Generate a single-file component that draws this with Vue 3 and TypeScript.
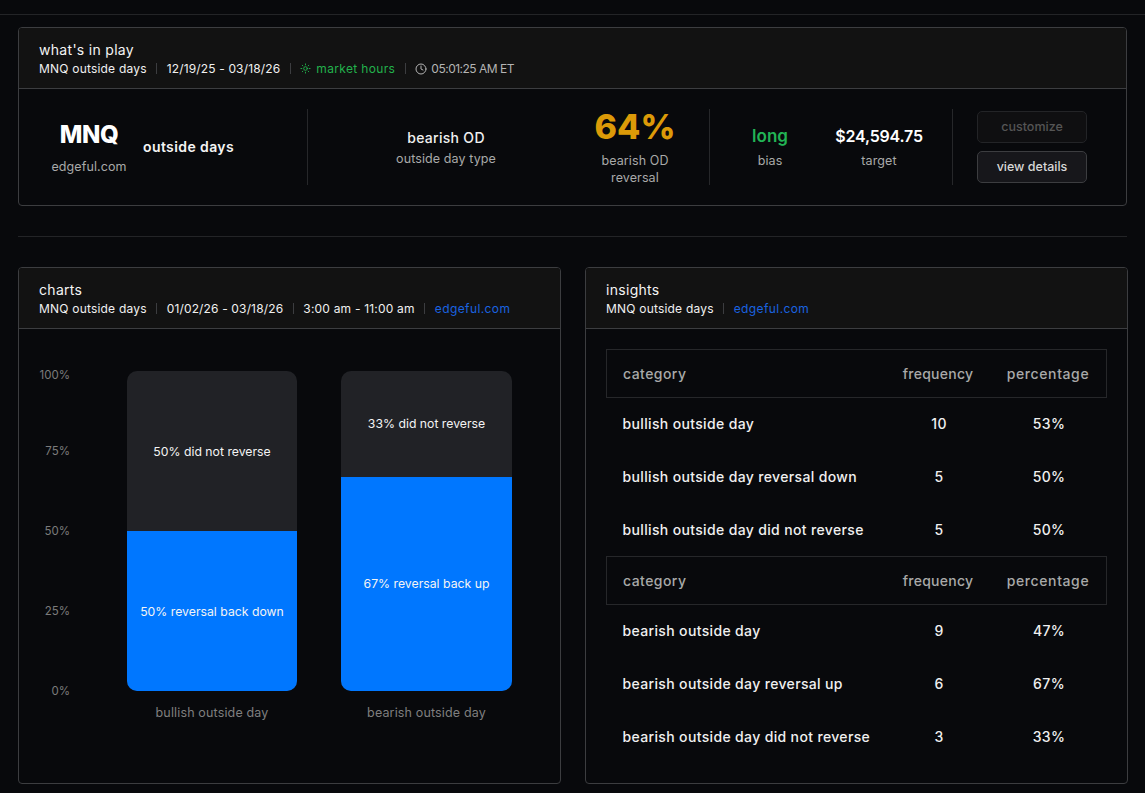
<script setup lang="ts">
interface Row { label: string; freq: number; pct: string }
interface Group { rows: Row[] }
const groups: Group[] = [
  { rows: [
    { label: 'bullish outside day', freq: 10, pct: '53%' },
    { label: 'bullish outside day reversal down', freq: 5, pct: '50%' },
    { label: 'bullish outside day did not reverse', freq: 5, pct: '50%' },
  ] },
  { rows: [
    { label: 'bearish outside day', freq: 9, pct: '47%' },
    { label: 'bearish outside day reversal up', freq: 6, pct: '67%' },
    { label: 'bearish outside day did not reverse', freq: 3, pct: '33%' },
  ] },
]
const bars = [
  { name: 'bullish outside day', top: '50% did not reverse', bottom: '50% reversal back down', pct: 50 },
  { name: 'bearish outside day', top: '33% did not reverse', bottom: '67% reversal back up', pct: 67 },
]
const ticks = ['100%', '75%', '50%', '25%', '0%']
</script>

<template>
  <div class="page">
    <div class="topbar"></div>
    <main class="main">
      <section class="card">
        <header class="head">
          <h2 class="title">what's in play</h2>
          <div class="meta">
            <span>MNQ outside days</span><i class="sep"></i>
            <span class="date">12/19/25 - 03/18/26</span><i class="sep"></i>
            <span class="green ico-row">
              <svg width="11" height="11" viewBox="0 0 24 24" fill="none" stroke="currentColor" stroke-width="2" stroke-linecap="round"><circle cx="12" cy="12" r="4"/><path d="M12 2v2M12 20v2M4.9 4.9l1.4 1.4M17.7 17.7l1.4 1.4M2 12h2M20 12h2M4.9 19.1l1.4-1.4M17.7 6.3l1.4-1.4"/></svg>
              market hours
            </span><i class="sep"></i>
            <span class="muted ico-row clock-row">
              <svg width="12" height="12" viewBox="0 0 24 24" fill="none" stroke="currentColor" stroke-width="2" stroke-linecap="round" stroke-linejoin="round"><circle cx="12" cy="12" r="10"/><path d="M12 6v6l4 2"/></svg>
              <span class="time">05:01:25 AM ET</span>
            </span>
          </div>
        </header>
        <div class="play">
          <div class="sec sec-a">
            <div class="brand">
              <div class="ticker">MNQ</div>
              <div class="lbl">edgeful.com</div>
            </div>
            <div class="strategy">outside days</div>
          </div>
          <div class="sec sec-b">
            <div class="stat type">
              <div class="val">bearish OD</div>
              <div class="lbl">outside day type</div>
            </div>
            <div class="stat rev">
              <div class="big">64%</div>
              <div class="lbl tight">bearish OD<br />reversal</div>
            </div>
          </div>
          <div class="sec sec-c">
            <div class="stat bias">
              <div class="val2 green2">long</div>
              <div class="lbl">bias</div>
            </div>
            <div class="stat target">
              <div class="val2 price">$24,594.75</div>
              <div class="lbl">target</div>
            </div>
          </div>
          <div class="actions">
            <button class="btn off" type="button">customize</button>
            <button class="btn" type="button">view details</button>
          </div>
        </div>
      </section>

      <hr class="rule" />

      <div class="cols">
        <section class="card tall">
          <header class="head">
            <h2 class="title">charts</h2>
            <div class="meta">
              <span>MNQ outside days</span><i class="sep"></i>
              <span class="date">01/02/26 - 03/18/26</span><i class="sep"></i>
              <span>3:00 am - 11:00 am</span><i class="sep"></i>
              <span class="blue">edgeful.com</span>
            </div>
          </header>
          <div class="chart">
            <div class="axis">
              <span v-for="t in ticks" :key="t" class="tick">{{ t }}</span>
            </div>
            <div class="bars">
              <div v-for="b in bars" :key="b.name" class="bar-col">
                <div class="bar">
                  <div class="seg seg-top">{{ b.top }}</div>
                  <div class="seg seg-bottom" :style="{ height: b.pct + '%' }">{{ b.bottom }}</div>
                </div>
                <div class="bar-name">{{ b.name }}</div>
              </div>
            </div>
          </div>
        </section>

        <section class="card tall">
          <header class="head">
            <h2 class="title">insights</h2>
            <div class="meta">
              <span>MNQ outside days</span><i class="sep"></i>
              <span class="blue">edgeful.com</span>
            </div>
          </header>
          <div class="table">
            <template v-for="(g, i) in groups" :key="i">
              <div class="tr th">
                <span class="left">category</span><span class="fq">frequency</span><span class="pc">percentage</span>
              </div>
              <div v-for="r in g.rows" :key="r.label" class="tr td">
                <span class="left">{{ r.label }}</span><span>{{ r.freq }}</span><span>{{ r.pct }}</span>
              </div>
            </template>
          </div>
        </section>
      </div>
    </main>
  </div>
</template>

<style>
html, body { margin: 0; background: #08090c; }
</style>

<style scoped>
.page { height: 793px; overflow: hidden; background: #08090c; color: #fff; font-family: Inter, "Noto Sans", sans-serif; }
.topbar { height: 14px; border-bottom: 1px solid #232427; }
.main { padding: 12px 18px 0; }
.card { border: 1px solid #3c3d40; border-radius: 4px; overflow: hidden; background: #08090c; }
.head { height: 60px; background: #121212; border-bottom: 1px solid #3c3d40; padding-left: 20px; display: flex; flex-direction: column; justify-content: center; }
.title { margin: 1px 0 0; font-size: 14px; line-height: 18px; font-weight: 400; color: #f4f4f4; letter-spacing: 0.3px; }
.meta { display: flex; align-items: center; font-size: 12px; line-height: 16px; color: #f0f0f0; letter-spacing: 0.2px; white-space: nowrap; margin-top: 2px; }
.sep { width: 1px; height: 11px; background: #3c3d40; margin: 0 9.5px; }
.ico-row { display: inline-flex; align-items: center; gap: 5px; }
.clock-row { gap: 4px; }
.date { letter-spacing: 0.15px; }
.time { letter-spacing: -0.5px; }
.green { color: #22b14c; letter-spacing: 0.35px; }
.muted { color: #b4b4b4; }
.blue { color: #1a63e0; letter-spacing: 0.4px; }

.play { height: 76px; padding: 20px 0 20px 20px; display: flex; align-items: stretch; }
.sec { display: flex; align-items: center; border-right: 1px solid #26272a; box-sizing: border-box; }
.sec-a { width: 269px; }
.sec-b { width: 402px; }
.sec-c { width: 243px; }
.brand { width: 100px; text-align: center; }
.ticker { font-size: 24px; line-height: 30px; font-weight: 800; letter-spacing: -0.5px; }
.brand .lbl { margin-top: 9px; }
.strategy { margin: 0 0 2px 4px; font-size: 14px; font-weight: 600; color: #f4f4f4; letter-spacing: 0.4px; }
.stat { text-align: center; }
.type { width: 276px; }
.rev { width: 102px; }
.bias { width: 120px; }
.target { width: 98px; }
.val { font-size: 14px; line-height: 20px; color: #f0f0f0; font-weight: 500; letter-spacing: 0.3px; }
.lbl { font-size: 12.5px; line-height: 16px; color: #a9a9a9; margin-top: 3px; white-space: nowrap; letter-spacing: 0.1px; }
.big { font-size: 34px; line-height: 38px; font-weight: 800; color: #dc9a08; }
.tight { margin-top: 6px; line-height: 17px; }
.val2 { font-size: 16px; line-height: 22px; font-weight: 600; color: #fff; }
.price { letter-spacing: -0.2px; }
.green2 { color: #22b455; font-size: 17px; }
.bias .lbl, .target .lbl { margin-top: 6px; }
.actions { margin-left: 24px; display: flex; flex-direction: column; justify-content: center; gap: 8px; }
.btn { width: 110px; height: 32px; box-sizing: border-box; border: 1px solid #3c3d40; border-radius: 5px; background: #17171b; color: #d8d8d8; font: 500 12.5px Inter, sans-serif; padding: 0 0 1px; }
.btn.off { background: #0f0f11; border-color: #232427; color: #555; }

.rule { height: 1px; border: 0; background: #232427; margin: 30px 0; }
.cols { display: grid; grid-template-columns: 543px 543px; gap: 24px; }
.tall { height: 517px; box-sizing: border-box; }

.chart { display: flex; padding: 34px 0 0 22px; }
.axis { width: 29px; height: 330px; display: flex; flex-direction: column; align-items: flex-end; font-size: 11.5px; color: #7b7b7b; margin-top: 4px; }
.tick { height: 16px; line-height: 16px; margin-bottom: 64px; }
.tick:first-child { margin-bottom: 60px; }
.bars { display: grid; grid-template-columns: 170px 171px; gap: 44px; margin-left: 57px; }
.bar { height: 320px; margin-top: 8px; border-radius: 10px; overflow: hidden; background: #212226; display: flex; flex-direction: column; font-size: 12.25px; color: #f4f4f4; }
.seg { display: flex; align-items: center; justify-content: center; white-space: nowrap; }
.seg-top { flex: 1; }
.seg-bottom { background: #0077ff; }
.bar-name { margin-top: 14px; text-align: center; font-size: 12.5px; line-height: 16px; color: #7f7f7f; letter-spacing: 0.15px; }

.table { padding: 20px 20px 0; }
.tr { display: grid; grid-template-columns: 1fr 104px 116px; align-items: center; text-align: center; box-sizing: border-box; white-space: nowrap; }
.left { text-align: left; }
.th { height: 49px; border: 1px solid #26272a; font-size: 14px; font-weight: 500; color: #a9a9a9; margin-bottom: -1px; letter-spacing: 0.45px; }
.th .left { padding-left: 16px; }
.th .fq { letter-spacing: 0.25px; }
.th .pc { letter-spacing: 0.6px; }
.td { height: 53px; font-size: 14px; font-weight: 500; color: #f0f0f0; letter-spacing: 0.35px; }
.td .left { padding-left: 16.5px; }
</style>
